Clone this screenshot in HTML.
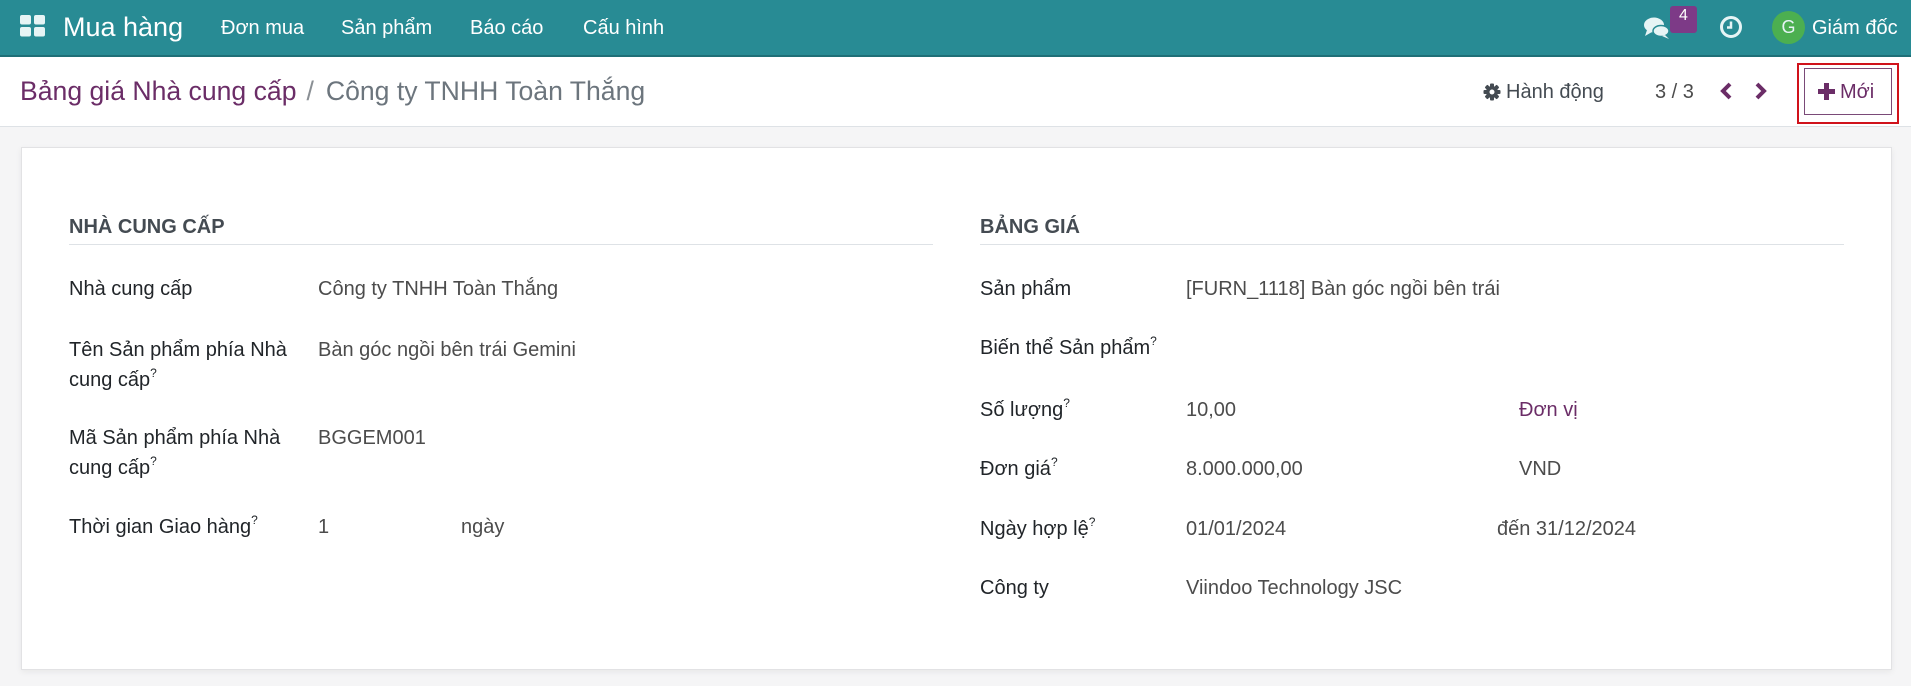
<!DOCTYPE html>
<html><head><meta charset="utf-8">
<style>
*{margin:0;padding:0;box-sizing:border-box}
body{width:1911px;height:686px;overflow:hidden;background:#f5f5f6;font-family:"Liberation Sans",Arial,sans-serif;position:relative}
.a{position:absolute;white-space:nowrap;line-height:30px}
.nav{position:absolute;left:0;top:0;width:1911px;height:57px;background:#288b94;border-bottom:2px solid #1f6f77}
.nv{color:#fff;font-size:20px}
.hdr{position:absolute;left:0;top:57px;width:1911px;height:70px;background:#fff;border-bottom:1px solid #dee2e6}
.sheet{position:absolute;left:21px;top:147px;width:1871px;height:523px;background:#fff;border:1px solid #e2e2e4;box-shadow:0 2px 6px rgba(0,0,0,.06)}
.l{font-size:20px;color:#212529}
.v{font-size:20px;color:#4c4c4c}
.h{font-size:20px;font-weight:bold;color:#444b52}
sup{font-size:12px;vertical-align:top;line-height:12px;position:relative;top:2px}
.line{position:absolute;height:1px;background:#dee2e6}
</style></head><body>
<div class="nav"></div>
<svg style="position:absolute;left:20px;top:15px" width="26" height="22"><rect x="0" y="0" width="11" height="9.5" rx="2" fill="#e6f4f5"/><rect x="14" y="0" width="11" height="9.5" rx="2" fill="#e6f4f5"/><rect x="0" y="12" width="11" height="9.5" rx="2" fill="#e6f4f5"/><rect x="14" y="12" width="11" height="9.5" rx="2" fill="#e6f4f5"/></svg>
<div class="a nv" style="left:63px;top:12px;font-size:27px;line-height:30px">Mua hàng</div>
<div class="a nv" style="left:221px;top:13px">Đơn mua</div>
<div class="a nv" style="left:341px;top:13px">Sản phẩm</div>
<div class="a nv" style="left:470px;top:13px">Báo cáo</div>
<div class="a nv" style="left:583px;top:13px">Cấu hình</div>
<svg style="position:absolute;left:1643px;top:16px" width="28" height="24" viewBox="0 0 28 24"><ellipse cx="11" cy="9" rx="10" ry="7.5" fill="#e6f4f5"/><path d="M4 14 L2 20 L9 16Z" fill="#e6f4f5"/><ellipse cx="18" cy="15" rx="8" ry="5.5" fill="#e6f4f5" stroke="#288b94" stroke-width="1.5"/><path d="M22 19 L26 23 L19 20Z" fill="#e6f4f5"/></svg>
<div style="position:absolute;left:1670px;top:6px;width:27px;height:27px;background:#7d3a87;border-radius:3px;color:#fff;font-size:16px;text-align:center;line-height:20px">4</div>
<svg style="position:absolute;left:1719px;top:15px" width="24" height="24" viewBox="0 0 24 24"><circle cx="12" cy="12" r="9.5" fill="none" stroke="#e6f4f5" stroke-width="3"/><path d="M12 6.5 V12.5 H8" fill="none" stroke="#e6f4f5" stroke-width="2.5"/></svg>
<div style="position:absolute;left:1772px;top:11px;width:33px;height:33px;border-radius:50%;background:#4caf50;color:#e6f4f5;font-size:18px;text-align:center;line-height:33px">G</div>
<div class="a nv" style="left:1812px;top:13px">Giám đốc</div>

<div class="hdr"></div>
<div class="a" style="left:20px;top:76px;font-size:26.6px;color:#6b2d67">Bảng giá Nhà cung cấp<span style="color:#8a8f94;margin:0 12px 0 10px">/</span><span style="color:#6c757d">Công ty TNHH Toàn Thắng</span></div>
<svg style="position:absolute;left:1483px;top:83px" width="18" height="18" viewBox="0 0 18 18"><g fill="#444b52"><circle cx="9" cy="9" r="6"/><rect x="7" y="0.5" width="4" height="17" rx="1"/><rect x="0.5" y="7" width="17" height="4" rx="1"/><rect x="7" y="0.5" width="4" height="17" rx="1" transform="rotate(45 9 9)"/><rect x="7" y="0.5" width="4" height="17" rx="1" transform="rotate(-45 9 9)"/></g><circle cx="9" cy="9" r="2.5" fill="#fff"/></svg>
<div class="a" style="left:1506px;top:77px;font-size:20px;color:#444b52">Hành động</div>
<div class="a" style="left:1655px;top:77px;font-size:20px;color:#4c4c4c">3 / 3</div>
<svg style="position:absolute;left:1719px;top:82px" width="50" height="18" viewBox="0 0 50 18"><path d="M11 2 L4 9 L11 16" fill="none" stroke="#6b2d67" stroke-width="4"/><path d="M38 2 L45 9 L38 16" fill="none" stroke="#6b2d67" stroke-width="4"/></svg>
<div style="position:absolute;left:1797px;top:63px;width:102px;height:61px;border:2px solid #d0121b"></div>
<div style="position:absolute;left:1804px;top:68px;width:88px;height:47px;border:1px solid #7a4a78"></div>
<svg style="position:absolute;left:1818px;top:83px" width="17" height="17"><rect x="6" y="0" width="5" height="17" fill="#6b2d67"/><rect x="0" y="6" width="17" height="5" fill="#6b2d67"/></svg>
<div class="a" style="left:1840px;top:77px;font-size:20px;color:#6b2d67">Mới</div>

<div class="sheet"></div>
<div class="a h" style="left:69px;top:212px">NHÀ CUNG CẤP</div>
<div class="line" style="left:69px;top:244px;width:864px"></div>
<div class="a h" style="left:980px;top:212px">BẢNG GIÁ</div>
<div class="line" style="left:980px;top:244px;width:864px"></div>

<div class="a l" style="left:69px;top:274px">Nhà cung cấp</div>
<div class="a v" style="left:318px;top:274px">Công ty TNHH Toàn Thắng</div>
<div class="a l" style="left:69px;top:335px;white-space:normal;width:240px">Tên Sản phẩm phía Nhà cung cấp<sup>?</sup></div>
<div class="a v" style="left:318px;top:335px">Bàn góc ngồi bên trái Gemini</div>
<div class="a l" style="left:69px;top:423px;white-space:normal;width:240px">Mã Sản phẩm phía Nhà cung cấp<sup>?</sup></div>
<div class="a v" style="left:318px;top:423px">BGGEM001</div>
<div class="a l" style="left:69px;top:512px">Thời gian Giao hàng<sup>?</sup></div>
<div class="a v" style="left:318px;top:512px">1</div>
<div class="a v" style="left:461px;top:512px">ngày</div>

<div class="a l" style="left:980px;top:274px">Sản phẩm</div>
<div class="a v" style="left:1186px;top:274px">[FURN_1118] Bàn góc ngồi bên trái</div>
<div class="a l" style="left:980px;top:333px">Biến thể Sản phẩm<sup>?</sup></div>
<div class="a l" style="left:980px;top:395px">Số lượng<sup>?</sup></div>
<div class="a v" style="left:1186px;top:395px">10,00</div>
<div class="a v" style="left:1519px;top:395px;color:#6b2d67">Đơn vị</div>
<div class="a l" style="left:980px;top:454px">Đơn giá<sup>?</sup></div>
<div class="a v" style="left:1186px;top:454px">8.000.000,00</div>
<div class="a v" style="left:1519px;top:454px">VND</div>
<div class="a l" style="left:980px;top:514px">Ngày hợp lệ<sup>?</sup></div>
<div class="a v" style="left:1186px;top:514px">01/01/2024</div>
<div class="a v" style="left:1497px;top:514px">đến 31/12/2024</div>
<div class="a l" style="left:980px;top:573px">Công ty</div>
<div class="a v" style="left:1186px;top:573px">Viindoo Technology JSC</div>
</body></html>
